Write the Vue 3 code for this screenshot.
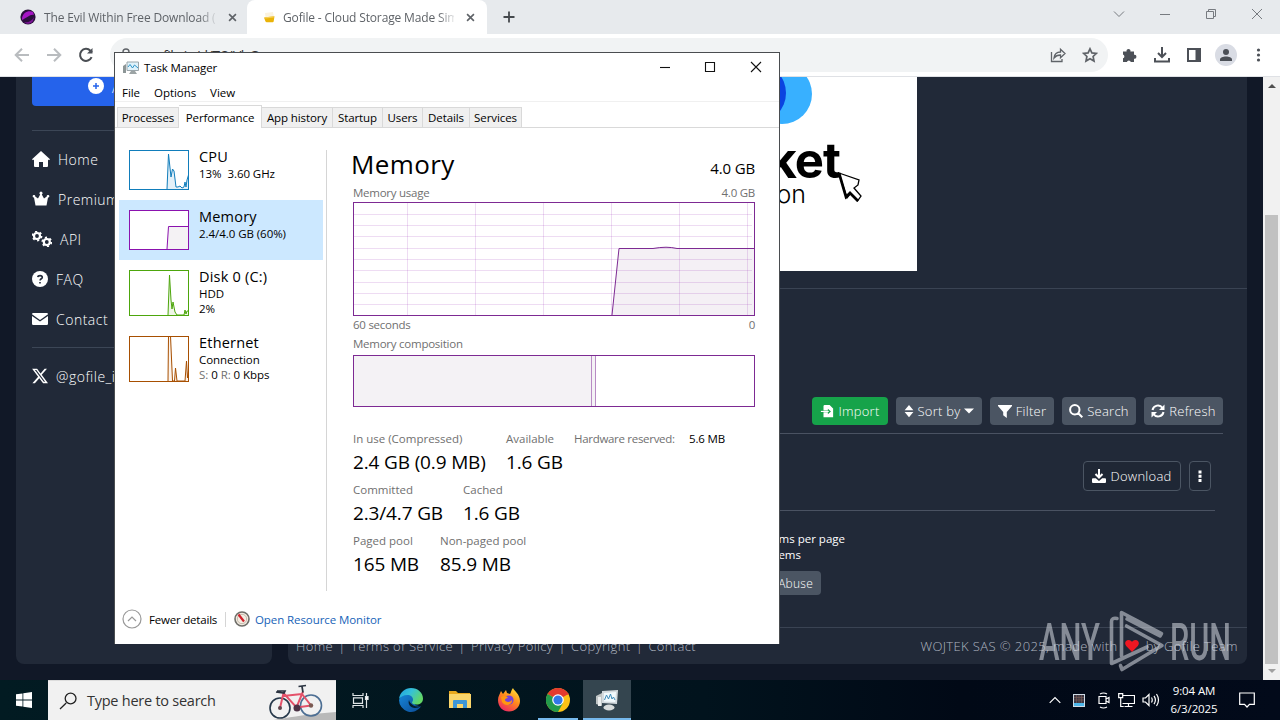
<template>
  <div class="screen">
    <header class="tab-strip">
      <div class="tab">
        <svg class="fav" viewBox="0 0 16 16">
          <circle cx="8" cy="8" r="7.6" fill="#2b0f3c" />
          <path d="M2 9C3 4 8 1 13 3L14 6C10 5 7 9 2 11z" fill="#a514c4" />
          <path d="M4 13c4 1 8-1 10-5l-1 4c-2 3-6 4-9 1z" fill="#7b1495" />
        </svg>
        <span class="tab-title">The Evil Within Free Download (v</span>
        <svg class="x" viewBox="0 0 10 10"><path d="M1.2 1.2l7.6 7.6M8.8 1.2L1.2 8.8" /></svg>
      </div>
      <div class="tab active">
        <svg class="fav" viewBox="0 0 16 16">
          <path d="M4 4l8-1 .8 4-8.300 1z" fill="#fbf3df" />
          <path d="M3 8.500l10.500-1.300-.8 5c-.1.800-.6 1.100-1.300 1.100H5.800c-.7 0-1.200-.4-1.400-1z" fill="#eab308" />
          <path d="M4 8.300l9-1-.2 1.200-8.500 1z" fill="#f5cf55" />
        </svg>
        <span class="tab-title">Gofile - Cloud Storage Made Sim</span>
        <svg class="x" viewBox="0 0 10 10"><path d="M1.2 1.2l7.6 7.6M8.8 1.2L1.2 8.8" /></svg>
      </div>
      <svg class="plus" viewBox="0 0 12 12"><path d="M6 .5v11M.5 6h11" /></svg>
      <div class="win-controls">
        <svg viewBox="0 0 12 12"><path d="M1 3.5l5 5 5-5" /></svg>
        <svg viewBox="0 0 12 12"><path d="M1 6.5h10" /></svg>
        <svg viewBox="0 0 12 12"><path d="M1.5 3.5h7v7h-7zM3.5 3.5v-2h7v7h-2" /></svg>
        <svg viewBox="0 0 12 12"><path d="M1 1l10 10M11 1L1 11" /></svg>
      </div>
    </header>

    <nav class="toolbar">
      <svg class="nav-icon faded" viewBox="0 0 16 16"><path d="M15 8H2M8 1.7L1.7 8 8 14.3" /></svg>
      <svg class="nav-icon faded" viewBox="0 0 16 16"><path d="M1 8h13M8 1.7L14.3 8 8 14.3" /></svg>
      <svg class="nav-icon reload" viewBox="0 0 16 16">
        <path d="M13.6 10.2A6 6 0 1 1 12.4 3.7L14 5.3" />
        <path d="M14.5 1v5.5H9z" class="solid" />
      </svg>
      <div class="omnibox">
        <svg class="lock" viewBox="0 0 12 14"><path d="M3 6V4a3 3 0 0 1 6 0v2M2 6h8v7H2z" /></svg>
        <span class="url">gofile.io/d/TOJVbG</span>
        <svg class="box-icon" viewBox="0 0 16 16">
          <path d="M1.500 5v9.500h10.500V12" />
          <path d="M4 11c.5-4 3-6 6.500-6V2.300L15 6.500l-4.500 4.200V8C7.500 8 5.500 9 4 11z" />
        </svg>
        <svg class="box-icon" viewBox="0 0 16 16">
          <path class="star" d="M8 1.800l1.900 4.100 4.500.5-3.300 3.100.9 4.500L8 11.700 4 14l.9-4.500-3.300-3.100 4.500-.5z" />
        </svg>
      </div>
      <div class="chrome-actions">
        <svg viewBox="0 0 16 16">
          <path class="solid" d="M1 4.500h3.600a2 2 0 1 1 3.800 0H12v3.300a2 2 0 1 1 0 3.900V15H8.800a2 2 0 0 0-3.900 0H1v-3.700a2 2 0 0 0 0-3.800z" />
        </svg>
        <svg viewBox="0 0 16 16"><path d="M8 0v9.500M4 6l4 4 4-4M1 11v3.500h14V11" /></svg>
        <svg viewBox="0 0 16 16"><path d="M2 2h12v12H2z" /><path class="solid" d="M9.500 2H14v12H9.500z" /></svg>
        <span class="avatar">
          <svg viewBox="0 0 16 16"><circle class="solid" cx="8" cy="5" r="3" /><path class="solid" d="M2 14v-1.500C2 10.500 5 9.500 8 9.500s6 1 6 3V14z" /></svg>
        </span>
        <svg viewBox="0 0 16 16">
          <circle class="solid" cx="8.500" cy="3" r="1.600" /><circle class="solid" cx="8.500" cy="8" r="1.600" /><circle class="solid" cx="8.500" cy="13" r="1.600" />
        </svg>
      </div>
    </nav>

    <main class="page">
      <aside class="sidebar">
        <div class="upload-btn">
          <svg viewBox="0 0 16 16"><circle cx="8" cy="8" r="8" fill="#fff" /><path d="M8 5v6M5 8h6" stroke="#2563eb" stroke-width="1.5" /></svg>
          <span>Add</span>
        </div>
        <hr />
        <a class="side-link">
          <svg viewBox="0 0 18 16"><path d="M9 0L0 8.200l1 1.100 1-.8V15q0 1 1 1h4v-5h4v5h4q1 0 1-1V8.500l1 .8 1-1.100z" /></svg>
          <span>Home</span>
        </a>
        <a class="side-link">
          <svg viewBox="0 0 18 16"><path d="M3.500 14.500L2 6.500a1.300 1.300 0 1 1 1.200-1L6 7.500l2.200-4a1.500 1.500 0 1 1 1.600 0l2.200 4 2.800-2a1.300 1.300 0 1 1 1.200 1l-1.500 8z" /></svg>
          <span>Premium</span>
        </a>
        <a class="side-link api">
          <svg viewBox="0 0 20 16">
            <g class="gear">
              <circle cx="5" cy="5" r="3" /><circle class="teeth" cx="5" cy="5" r="4.500" />
              <circle cx="14.800" cy="11" r="3" /><circle class="teeth" cx="14.800" cy="11" r="4.500" />
            </g>
          </svg>
          <span>API</span>
        </a>
        <a class="side-link small">
          <svg viewBox="0 0 16 16">
            <circle cx="8" cy="8" r="8" />
            <path d="M5.800 6.200c.2-2 4.500-2.200 4.500.2 0 1.300-2.200 1.400-2.200 3M8 11v1.600" stroke="#212938" stroke-width="1.600" fill="none" />
          </svg>
          <span>FAQ</span>
        </a>
        <a class="side-link small">
          <svg viewBox="0 0 16 16">
            <path d="M1.200 2h13.600Q16 2 16 3.200L8 9 0 3.200Q0 2 1.200 2z" />
            <path d="M0 5l8 5.600L16 5v7.700q0 1.300-1.300 1.300H1.300Q0 14 0 12.700z" />
          </svg>
          <span>Contact</span>
        </a>
        <hr class="second" />
        <a class="side-link small">
          <svg viewBox="0 0 16 16"><path fill-rule="evenodd" d="M12.600.8h2.400L9.700 6.800 16 15.200h-4.900L7.300 10.200l-4.400 5H.4l5.700-6.500L.1.800h5l3.500 4.600zM11.800 13.700h1.300L4.300 2.100H2.900z" /></svg>
          <span>@gofile_io</span>
        </a>
      </aside>

      <section class="content">
        <div class="banner">
          <svg viewBox="0 0 300 194">
            <circle cx="165" cy="17" r="30" fill="#38b0ff" />
            <circle cx="139" cy="16" r="30" fill="#0b43e0" />
            <text x="223" y="101" class="ket" text-anchor="end">ket</text>
            <text x="189" y="126" class="ion" text-anchor="end">on</text>
            <path d="M222 96l20 7-1 5-4 3 7 8-3.500 5-7-7.500-3.500 4.500z" fill="#fff" stroke="#000" stroke-width="1.300" />
            <path d="M222 96l7 24 4-4 8 8" fill="none" stroke="#000" stroke-width="2.700" />
          </svg>
        </div>
        <div class="file-panel">
          <div class="action-row">
            <button class="btn import">
              <svg viewBox="0 0 14 16">
                <path d="M4 1h6l4 4v10H3V9.500h5v2.300L11.500 8.500 8 5.300v2.200H3V2z" />
                <path d="M0 8.500h9" class="line" />
              </svg>Import
            </button>
            <button class="btn sort">
              <svg class="updown" viewBox="0 0 10 16"><path d="M5 1L10 7H0zM5 15L0 9h10z" /></svg>Sort by<svg class="caret" viewBox="0 0 10 6"><path d="M0 .5h10L5 5.500z" /></svg>
            </button>
            <button class="btn filter">
              <svg viewBox="0 0 14 14"><path d="M0 1h14v1L8.800 8v6L5.200 11.200V8L0 2z" /></svg>Filter
            </button>
            <button class="btn search">
              <svg viewBox="0 0 14 14"><path class="line thick" d="M9 9l4.300 4.300M10.500 5.800a4.700 4.700 0 1 1-9.400 0 4.700 4.700 0 0 1 9.400 0z" /></svg>Search
            </button>
            <button class="btn refresh">
              <svg viewBox="0 0 14 14">
                <path class="line thick" d="M1.500 6A5.500 5.500 0 0 1 11.500 4M12.500 8A5.500 5.500 0 0 1 2.500 10" />
                <path d="M13.500.5V6H8zM.5 13.500V8H6z" />
              </svg>Refresh
            </button>
          </div>
          <div class="file-row">
            <button class="btn outline download">
              <svg viewBox="0 0 14 14">
                <path class="line thick" d="M7 0v8M3.500 5L7 8.500 10.500 5" />
                <path d="M1 9.300h2.800L7 12l3.200-2.700H13q1 0 1 1v2.700q0 1-1 1H1q-1 0-1-1v-2.700q0-1 1-1z" />
              </svg>Download
            </button>
            <button class="btn outline dots">
              <svg viewBox="0 0 4 12"><path d="M.5.5h3v3h-3zM.5 4.700h3v3h-3zM.5 8.900h3v3h-3z" /></svg>
            </button>
          </div>
          <div class="paging">
            <span>items per page</span>
            <span class="count">items</span>
            <button class="btn abuse">Abuse</button>
          </div>
        </div>
        <footer class="site-footer">
          <div class="links">
            <template v-for="(link, idx) in footerLinks" :key="link">
              <i v-if="idx">|</i><span>{{ link }}</span>
            </template>
          </div>
          <div class="credit">
            WOJTEK SAS © 2025, made with
            <svg viewBox="0 0 14 12"><path d="M7 12L1.200 6C-1 3.500.5 0 3.500 0 5.500 0 6.500 1 7 2 7.500 1 8.500 0 10.500 0c3 0 4.500 3.500 2.300 6z" /></svg>
            by Gofile Team
          </div>
        </footer>
      </section>

      <div class="scrollbar">
        <svg viewBox="0 0 8 4"><path d="M4 0l4 4H0z" fill="#505050" /></svg>
        <div class="thumb"></div>
        <svg viewBox="0 0 8 4"><path d="M0 0h8L4 4z" fill="#a0a0a0" /></svg>
      </div>
    </main>

    <div class="taskbar">
      <div class="start">
        <svg viewBox="0 0 16 16"><path d="M0 2.300L6.500 1.400v6.200H0zM7.300 1.300L16 0v7.600H7.300zM0 8.400h6.500v6.200L0 13.700zM7.300 8.400H16V16l-8.700-1.300z" fill="#fff" /></svg>
      </div>
      <div class="search-box">
        <svg class="glass" viewBox="0 0 18 18"><path d="M7.200 11L1 17M17 6.500a5.400 5.400 0 1 1-10.800 0 5.400 5.400 0 0 1 10.800 0z" /></svg>
        <span>Type here to search</span>
        <svg class="bike" viewBox="0 0 76 40">
          <path d="M8 40C30 36 50 33 76 31v9z" fill="#b9b9b9" />
          <g fill="none">
            <circle cx="20" cy="27" r="10" stroke="#26384a" stroke-width="1.600" />
            <circle cx="51" cy="24.500" r="10.500" stroke="#4c6e93" stroke-width="1.600" />
            <path d="M20 27l3.500-15 13 14.500L43 10.500M23 15l19-2M36.500 26.500L51 24.500 42 13" stroke="#e4526a" stroke-width="2" />
            <path d="M16 11l8 1 1-2h-8M38.500 5.500l7.500-1M42 5.500l1 6" stroke="#2a3340" stroke-width="1.700" />
          </g>
          <circle cx="37" cy="27" r="3.500" fill="#4c3346" />
          <circle cx="20" cy="27" r="2" fill="#60444c" />
          <circle cx="51" cy="24.500" r="2.200" fill="#7a5a52" />
        </svg>
      </div>
      <div class="task-icon view">
        <svg viewBox="0 0 17 17"><path d="M1 1v2.500h10V1M1 16v-2.500h10V16M1.500 5.800h9v5.500h-9zM14.500 1v15" /><path d="M13.500 4.500h2.500v3h-2.500z" class="white" /></svg>
      </div>
      <div class="task-icon">
        <svg class="app" viewBox="0 0 24 24">
          <defs>
            <linearGradient id="edgeTop" x1="0" x2="1" y1="0" y2=".5"><stop offset="0" stop-color="#1f9fe0" /><stop offset=".5" stop-color="#35c1d8" /><stop offset="1" stop-color="#62d766" /></linearGradient>
            <linearGradient id="edgeLow" x1="0" x2="1" y1="0" y2="1"><stop offset="0" stop-color="#1789dc" /><stop offset="1" stop-color="#0b4b96" /></linearGradient>
          </defs>
          <path d="M0 12A12 12 0 0 1 12 4l6 9-2 4 6 1.500A12 12 0 0 1 0 12z" fill="url(#edgeLow)" />
          <path d="M0 11C1 4 6 0 12 0c7 0 12 5 12 10.500 0 4-3 6-6.500 6-3 0-4.500-1-4.500-2 0-.7 1-1.200 1-3C14 9 11.500 7 8.500 7 4.500 7 1.500 9 0 11z" fill="url(#edgeTop)" />
          <path d="M10 12c-1.500 4 1.500 8 6 8 2.500 0 4.500-.8 6-2.200-2.500 1-5.500.8-7.500-.4-2.300-1.300-4-3-4.500-5.400z" fill="#041d2c" />
        </svg>
      </div>
      <div class="task-icon">
        <svg class="app" viewBox="0 0 24 24">
          <path d="M1 3h7l2 2h12v5H1z" fill="#e9a91e" />
          <path d="M1 6h22v14H1z" fill="#fbd66b" />
          <path d="M5 20v-7q0-1 1-1h12q1 0 1 1v7h-4v-4H9v4z" fill="#3f97d6" />
        </svg>
      </div>
      <div class="task-icon">
        <svg class="app" viewBox="0 0 24 24">
          <defs>
            <linearGradient id="fox" x1=".8" x2=".2" y1="0" y2="1"><stop offset="0" stop-color="#ffe13b" /><stop offset=".45" stop-color="#ff8a1c" /><stop offset="1" stop-color="#ec2067" /></linearGradient>
          </defs>
          <path d="M1 12C1 8 3 6 4 3l2 3 3-4 1 3 3 1c1-1 1-4 3-6 1 3 7 6 7 13 0 6-5 10.500-11 10.500S1 19 1 12z" fill="url(#fox)" />
          <circle cx="12" cy="12" r="4.600" fill="#7542d9" />
          <path d="M4 9c3-2 6-1 7 1-2 0-3 1-3 2 0 2 5 3 7 0 1 5-7 7-10 2z" fill="#ff980f" />
        </svg>
      </div>
      <div class="task-icon running">
        <svg class="app" viewBox="0 0 24 24">
          <circle cx="12" cy="12" r="12" fill="#fbc116" />
          <path d="M12 12L1.600 6a12 12 0 0 1 20.800 0z" fill="#e33b2e" />
          <path d="M12 12L1.600 6A12 12 0 0 0 12 24l5-9z" fill="#229a4b" />
          <path d="M12 6h10.400" stroke="#e33b2e" stroke-width="1" />
          <circle cx="12" cy="12" r="5.800" fill="#fff" /><circle cx="12" cy="12" r="4.600" fill="#3178e8" />
        </svg>
      </div>
      <div class="task-icon current">
        <svg class="app" viewBox="0 0 24 24">
          <path d="M1 8l6-3v13l-6-2z" fill="#bfc4c5" /><path d="M3 9h3v9H3z" fill="#ecefef" />
          <path d="M7 3l16-1-1 14-15-1z" fill="#d3dade" /><path d="M9 5l12-1-.8 10L9 13.500z" fill="#f2fafd" />
          <path d="M9.500 12l2-5 2 4 2-5 1.500 5 1.500-2 1.500 3" stroke="#3f8cba" fill="none" />
          <ellipse cx="14" cy="19.500" rx="5.500" ry="3" fill="#d8dcdc" />
        </svg>
      </div>
      <div class="tray">
        <svg class="t-chev" viewBox="0 0 12 8"><path d="M.7 6.800L6 1.500l5.300 5.300" /></svg>
        <svg class="t-grid" viewBox="0 0 12 13">
          <path d="M0 0h12v13H0z" fill="#cfdbe5" stroke="none" /><path d="M1 1h10v8H1z" fill="#3b3541" stroke="none" />
          <path d="M1 3.500h10M1 6h10M3.500 1v8M6 1v8M8.500 1v8" stroke="#7d6058" stroke-width=".6" /><path d="M1 9h10v3H1z" fill="#4db7ea" stroke="none" />
        </svg>
        <svg class="t-cam" viewBox="0 0 14 17"><path d="M2 4.500h7v7H2zM9 7l3-1.500v5L9 9M3 2Q6.500 0 10 2M3 15q3.500 2 7 0" /></svg>
        <svg class="t-net" viewBox="0 0 17 15"><path d="M4.500 2.500h12v8h-12M10.500 10.500v3M6.500 13.500h8M.7.700h4v4h-4zM2.700 4.700v8.800h3" /></svg>
        <svg class="t-vol" viewBox="0 0 18 14"><path d="M1 5h2.500L7 1.500v11L3.500 9H1zM9.500 4.500q1.500 2.500 0 5M12 2.800q2.800 4.200 0 8.400M14.500 1q4 6 0 12" /></svg>
        <div class="clock"><span>9:04 AM</span><span>6/3/2025</span></div>
        <svg class="t-note" viewBox="0 0 16 16"><path d="M.7 1h14.600v11.300H10.500L8 15l-2.500-2.700H.7z" /></svg>
      </div>
    </div>

    <section class="tm">
      <div class="tm-title">
        <svg class="tm-icon" viewBox="0 0 16 15">
          <path d="M0 6l3-2v9H0z" fill="#8d9697" /><path d="M4 2h11.500v8.500H4z" fill="#dff2fb" stroke="#9aa5aa" />
          <path d="M5 7l2-2.500L9.500 8l2-3L15 8" stroke="#2f95c9" fill="none" /><path d="M6 14h8l-2-3H8z" fill="#9ca4a5" />
        </svg>
        <span>Task Manager</span>
        <div class="tm-controls">
          <svg viewBox="0 0 12 12"><path d="M2 6.500h10" /></svg>
          <svg viewBox="0 0 12 12"><path d="M1.500 1.500h9v9h-9z" /></svg>
          <svg viewBox="0 0 12 12"><path d="M1 1l10 10M11 1L1 11" /></svg>
        </div>
      </div>
      <div class="tm-menu"><span>File</span><span>Options</span><span>View</span></div>
      <div class="tm-tabs">
        <span v-for="tab in tabs" :key="tab.name" class="tm-tab" :class="{ current: tab.name === 'Performance' }" :style="{ width: tab.w + 'px' }">{{ tab.name }}</span>
      </div>
      <div class="tm-body">
        <div class="perf-list">
          <div v-for="item in resources" :key="item.name" class="perf-item" :class="{ selected: item.name === 'Memory', tall: item.h > 40 }">
            <svg class="thumb-chart" :height="item.h" :viewBox="`0 0 60 ${item.h}`">
              <rect width="60" :height="item.h" fill="#fff" />
              <path :d="item.line + ` V${item.h - 1} H38z`" :fill="item.fill" />
              <path :d="item.line" fill="none" :stroke="item.color" />
              <rect x=".5" y=".5" width="59" :height="item.h - 1" fill="none" :stroke="item.color" />
            </svg>
            <div class="perf-text">
              <strong>{{ item.name }}</strong>
              <span v-for="line in item.lines" :key="line">{{ line }}</span>
              <span v-if="item.name === 'Ethernet'"><em>S:</em> 0 <em>R:</em> 0 Kbps</span>
            </div>
          </div>
        </div>
        <div class="detail">
          <div class="detail-head"><h1>Memory</h1><span>4.0 GB</span></div>
          <div class="caption"><span>Memory usage</span><span>4.0 GB</span></div>
          <svg class="usage" viewBox="0 0 402 114">
            <path class="usage-fill" d="M259 113L266 46h34q14-3 24 0h77v67z" />
            <path class="grid" :d="gridPath" />
            <path class="usage-line" d="M259 113L266 46.500h34q14-2.500 24 0h77.500" />
            <rect x=".5" y=".5" width="401" height="113" class="frame" />
          </svg>
          <div class="caption below"><span>60 seconds</span><span>0</span></div>
          <div class="caption comp"><span>Memory composition</span></div>
          <div class="composition"><div class="used"></div><div class="modified"></div></div>
          <div class="stats">
            <div v-for="(row, idx) in stats" :key="idx" class="stat-row">
              <div v-for="s in row" :key="s.label" class="stat" :style="{ width: s.w + 'px' }">
                <label>{{ s.label }}</label><b>{{ s.value }}</b>
              </div>
              <div v-if="idx === 0" class="reserved"><label>Hardware reserved:</label><span>5.6 MB</span></div>
            </div>
          </div>
        </div>
      </div>
      <div class="tm-footer">
        <svg class="fewer" viewBox="0 0 20 20"><circle cx="10" cy="10" r="9" /><path d="M6 12l4-4 4 4" /></svg>
        <span class="fewer-text">Fewer details</span>
        <svg class="gauge" viewBox="0 0 16 16">
          <circle cx="8" cy="8" r="7" fill="#f3ece2" stroke="#6f6e69" stroke-width="1.600" />
          <circle cx="8" cy="8" r="4.700" fill="none" stroke="#c4b9aa" />
          <path d="M4.500 3.500l5.500 7" stroke="#d0202a" stroke-width="2.200" />
        </svg>
        <a>Open Resource Monitor</a>
      </div>
    </section>

    <svg class="watermark" viewBox="0 0 196 64">
      <text x="1" y="52" textLength="61" lengthAdjust="spacingAndGlyphs">ANY</text>
      <text x="132" y="52" textLength="61" lengthAdjust="spacingAndGlyphs">RUN</text>
      <path d="M79 10.500q-5.500-1-5.500 3V55.500L109 39M83.500 48V4.500L123.500 25.500l-1.500 2.500L89 11M88.500 18L124 37.500 84 61.500l-1.500-4" />
    </svg>
  </div>
</template>

<script setup>
const footerLinks = ['Home', 'Terms of Service', 'Privacy Policy', 'Copyright', 'Contact']

const tabs = [
  { name: 'Processes', w: 62 },
  { name: 'Performance', w: 83 },
  { name: 'App history', w: 71 },
  { name: 'Startup', w: 50 },
  { name: 'Users', w: 40 },
  { name: 'Details', w: 47 },
  { name: 'Services', w: 52 },
]

const resources = [
  { name: 'CPU', h: 40, color: '#117dbb', fill: '#e3f0f8', lines: ['13%  3.60 GHz'], line: 'M38 39L39.500 4L42 27L43.500 19L45 21L47 37H49L51 36L53 38L55 37L56 32L57 37L58 30L59.500 25' },
  { name: 'Memory', h: 40, color: '#8b12ae', fill: '#f4f2f4', lines: ['2.4/4.0 GB (60%)'], line: 'M38 39L39.500 16.500H60' },
  { name: 'Disk 0 (C:)', h: 46, color: '#4da60c', fill: '#eef6e6', lines: ['HDD', '2%'], line: 'M39 45L40.500 5L42 30L43 39L44 32L46 42L48 45L55 45L56 40L57 44L58 41H60' },
  { name: 'Ethernet', h: 46, color: '#a74f01', fill: '#fcf3eb', lines: ['Connection'], line: 'M39 45L39.500 0H41.500L43.500 45H45.500L46.500 32L48 45H56L57.500 25L58.500 42L59.500 35' },
]

const stats = [
  [
    { label: 'In use (Compressed)', value: '2.4 GB (0.9 MB)', w: 153 },
    { label: 'Available', value: '1.6 GB', w: 68 },
  ],
  [
    { label: 'Committed', value: '2.3/4.7 GB', w: 110 },
    { label: 'Cached', value: '1.6 GB', w: 68 },
  ],
  [
    { label: 'Paged pool', value: '165 MB', w: 87 },
    { label: 'Non-paged pool', value: '85.9 MB', w: 100 },
  ],
]

const gridPath = [
  ...[54, 122, 190, 258, 326, 394].map((x) => `M${x}.5 1v112`),
  ...[12, 23, 34, 46, 57, 68, 80, 91, 102].map((y) => `M1 ${y}.5h398`),
].join('')
</script>

<style>
body {
  overflow: hidden;
}
</style>

<style scoped>
* {
  box-sizing: border-box;
}

.screen {
  position: relative;
  width: 1280px;
  height: 720px;
  display: flex;
  flex-direction: column;
  overflow: hidden;
  font-family: 'Open Sans', 'Noto Sans', sans-serif;
  font-size: 12px;
  white-space: nowrap;
}

svg {
  flex: none;
  display: block;
}

/* browser */
.tab-strip {
  height: 34px;
  flex: none;
  display: flex;
  align-items: center;
  background: #e7eaed;
}

.tab {
  width: 247px;
  height: 34px;
  display: flex;
  align-items: center;
  padding-left: 20px;
  color: #5f6368;
}
.tab.active {
  width: 240px;
  padding-left: 14px;
  background: #fff;
  border-radius: 8px 8px 0 0;
}

.fav { width: 16px; height: 16px; }
.tab-title {
  margin-left: 8px;
  width: 171px;
  overflow: hidden;
  letter-spacing: -0.15px;
  mask-image: linear-gradient(90deg, #000 155px, transparent 174px);
}
.tab.active .tab-title { margin-left: 6px; }
.x {
  width: 9px;
  height: 9px;
  margin-left: 13px;
  stroke: #5f6368;
  stroke-width: 1.8;
}
.tab.active .x { margin-left: 12px; }
.plus { width: 12px; height: 12px; margin-left: 16px; stroke: #45494d; stroke-width: 1.8; }

.win-controls {
  margin-left: auto;
  margin-top: -6px;
  display: flex;
  gap: 34px;
  padding-right: 17px;
}
.win-controls svg { width: 12px; height: 12px; fill: none; stroke: #777b80; stroke-width: 1; }

.toolbar {
  height: 43px;
  flex: none;
  display: flex;
  align-items: center;
  background: #fff;
  border-bottom: 1px solid #dfe1e5;
  padding-left: 14px;
}
.nav-icon { width: 16px; height: 16px; margin-right: 16px; fill: none; stroke: #5f6368; stroke-width: 2; }
.nav-icon.faded { stroke: #b9bcbf; }
.nav-icon.reload { stroke: #4a4e53; }
.solid { fill: #4c5057; stroke: none; }

.omnibox {
  width: 998px;
  height: 34px;
  border-radius: 17px;
  background: #f1f3f4;
  display: flex;
  align-items: center;
  padding: 0 10px;
}
.lock { width: 12px; height: 14px; fill: none; stroke: #5f6368; stroke-width: 1.4; }
.url { font-size: 14px; color: #333; margin-left: 16px; margin-right: auto; letter-spacing: -0.5px; }
.box-icon { width: 16px; height: 16px; margin-left: 16px; fill: none; stroke: #5f6368; stroke-width: 1.3; }
.star { stroke-width: 1.7; }

.chrome-actions { display: flex; align-items: center; gap: 16px; margin-left: 14px; }
.chrome-actions svg { width: 16px; height: 16px; fill: none; stroke: #4c5057; stroke-width: 2; }
.avatar { width: 22px; height: 22px; margin: 0 -3px; border-radius: 50%; background: #d9dce4; display: flex; align-items: center; justify-content: center; }

/* page */
.page {
  height: 603px;
  flex: none;
  display: flex;
  background: #111827;
  padding-left: 16px;
  color: #fff;
  font-weight: 300;
}

.sidebar {
  width: 256px;
  height: 587px;
  padding: 0 16px;
  background: #212938;
  border-radius: 0 0 8px 8px;
}
.upload-btn {
  height: 29px;
  margin-bottom: 24px;
  padding: 1px 0 0 56px;
  background: #2563eb;
  border-radius: 0 0 4px 4px;
  display: flex;
  gap: 8px;
  font-size: 14px;
}
.upload-btn svg { width: 16px; height: 16px; }
.sidebar hr { margin: 0 0 8px; border: 0; border-top: 1px solid #3c4656; }
.sidebar hr.second { margin-top: 8px; }
.side-link {
  height: 40px;
  display: flex;
  align-items: center;
  gap: 8px;
  font-size: 14px;
  letter-spacing: 0.5px;
}
.side-link svg { width: 18px; height: 16px; fill: #fff; }
.side-link.small svg { width: 16px; }
.side-link.api svg { width: 20px; }
.gear { fill: none; stroke: #fff; stroke-width: 2.2; }
.teeth { stroke-width: 1.8; stroke-dasharray: 2.1 2.6; }

.content {
  width: 959px;
  height: 587px;
  margin: 0 16px;
  display: flex;
  flex-direction: column;
  background: #212938;
  border-radius: 0 0 8px 8px;
}
.banner {
  display: flex;
  justify-content: center;
  height: 212px;
  padding-right: 1px;
  border-bottom: 1px solid #3a4353;
}
.banner svg { width: 300px; height: 194px; background: #fff; }
.ket { font: 700 49px Inter, sans-serif; letter-spacing: -1px; }
.ion { font: 300 25px Inter, sans-serif; }

.file-panel { height: 338px; padding: 108px 24px 0 16px; }
.action-row {
  height: 37px;
  display: flex;
  justify-content: flex-end;
  gap: 8px;
  border-bottom: 1px solid #4a5262;
}
.btn {
  height: 28px;
  padding: 0;
  border: 0;
  border-radius: 4px;
  display: flex;
  align-items: center;
  justify-content: center;
  gap: 4px;
  color: #fff;
  background: #4b5563;
  font: 300 13px 'Open Sans', sans-serif;
  letter-spacing: 0.25px;
}
.btn svg { width: 14px; height: 14px; fill: #fff; }
.line { fill: none; stroke: #fff; stroke-width: 1.3; }
.line.thick { stroke-width: 2; }
.btn.import { width: 76px; background: #16a34a; }
.btn.sort { width: 86px; }
.btn.filter { width: 64px; }
.btn.search { width: 74px; }
.btn.refresh { width: 79px; }
.btn .updown { width: 10px; }
.btn .caret { width: 10px; height: 6px; }
.btn.outline { height: 30px; background: #1f2735; border: 1px solid #4b5563; }
.btn.download { width: 98px; }
.btn.dots { width: 22px; }
.btn.dots svg { width: 4px; height: 12px; }
.file-row {
  height: 77px;
  margin-right: 8px;
  padding: 27px 4px 0 0;
  display: flex;
  justify-content: flex-end;
  gap: 8px;
  border-bottom: 1px solid #4a5262;
}
.paging { width: 541px; padding-top: 20px; display: flex; flex-direction: column; align-items: flex-end; font-size: 11.5px; font-weight: 400; line-height: 16px; }
.count { margin-right: 44px; }
.btn.abuse { height: 24px; width: 66px; margin: 8px 24px 0 0; justify-content: flex-end; padding-right: 8px; font-size: 12px; }

.site-footer {
  flex: 1;
  display: flex;
  align-items: center;
  justify-content: space-between;
  padding: 0 9px 0 8px;
  border-top: 1px solid #3a4353;
  font-size: 13px;
  letter-spacing: 0.35px;
  color: #b0b6c0;
}
.links { display: flex; }
.links i { font-style: normal; width: 18px; text-align: center; }
.credit { display: flex; gap: 7px; align-items: center; letter-spacing: 0.4px; }
.credit svg { width: 14px; height: 12px; fill: #f01722; }

.scrollbar {
  width: 17px;
  background: #f1f1f1;
  display: flex;
  flex-direction: column;
  align-items: center;
  padding: 7px 0;
}
.scrollbar svg { width: 8px; height: 4px; }
.scrollbar .thumb { width: 13px; height: 449px; margin: 127px 0 5px; background: #c1c1c1; }

/* taskbar */
.taskbar {
  height: 40px;
  flex: none;
  display: flex;
  align-items: center;
  background: linear-gradient(90deg, #021b22, #01131d 55%, #010916 75%, #020a1a);
  color: #fff;
}
.start { width: 48px; display: flex; justify-content: center; }
.start svg { width: 16px; height: 16px; }
.search-box {
  width: 288px;
  height: 40px;
  display: flex;
  align-items: center;
  padding-left: 11px;
  background: #f1f1f1;
  border-top: 1px solid #dcdcdc;
  color: #333;
  font-size: 14.5px;
}
.search-box span { width: 170px; margin-left: 10px; letter-spacing: -0.25px; }
.glass { width: 18px; height: 18px; fill: none; stroke: #222; stroke-width: 1.3; }
.bike { width: 76px; height: 40px; margin-left: 3px; }
.task-icon { width: 48px; height: 40px; margin-right: 1px; display: flex; align-items: center; justify-content: center; }
.task-icon.view { margin-right: 3px; }
.task-icon.view svg { width: 17px; height: 17px; fill: none; stroke: #dfe5e7; stroke-width: 1.2; }
.white { fill: #fff; }
.app { width: 24px; height: 24px; }
.task-icon.running { background: linear-gradient(#76b9ed, #76b9ed) center bottom / 40px 2px no-repeat; }
.task-icon.current { background: #34454f; border-bottom: 2px solid #76b9ed; padding-top: 2px; }
.tray { margin-left: auto; display: flex; align-items: center; padding-right: 25px; }
.tray svg { fill: none; stroke: #fff; stroke-width: 1.2; }
.t-chev { width: 12px; height: 8px; margin-right: 12px; }
.t-grid { width: 12px; height: 13px; margin-right: 12px; }
.t-cam { width: 14px; height: 17px; margin-right: 7px; }
.t-net { width: 17px; height: 15px; margin-right: 7px; }
.t-vol { width: 18px; height: 14px; margin-right: 9px; }
.t-note { width: 16px; height: 16px; margin-left: 20px; }
.clock { width: 50px; display: flex; flex-direction: column; align-items: center; line-height: 18px; font-size: 11.5px; letter-spacing: -0.1px; }

/* task manager window, floats over the browser */
.tm {
  position: absolute;
  left: 114px;
  top: 52px;
  width: 666px;
  height: 592px;
  display: flex;
  flex-direction: column;
  background: #fff;
  border: 1px solid #4a4d50;
  border-bottom: 0;
  color: #000;
  letter-spacing: -0.15px;
  font-size: 11.5px;
}
.tm-title { height: 30px; display: flex; align-items: center; padding: 0 0 2px 8px; gap: 5px; }
.tm-icon { width: 16px; height: 15px; }
.tm-controls { margin-left: auto; display: flex; gap: 34px; padding-right: 17px; }
.tm-controls svg { width: 12px; height: 12px; fill: none; stroke: #111; stroke-width: 1.1; }
.tm-menu { height: 19px; display: flex; align-items: center; padding-left: 7px; gap: 14px; border-bottom: 1px solid #f0f0f0; letter-spacing: -0.05px; }
.tm-tabs { height: 26px; display: flex; align-items: flex-end; padding-left: 2px; border-bottom: 1px solid #d9d9d9; letter-spacing: -0.1px; }
.tm-tab {
  height: 20px;
  display: flex;
  align-items: center;
  justify-content: center;
  background: #f0f0f0;
  border: 1px solid #d9d9d9;
  border-width: 1px 1px 0 0;
}
.tm-tab:first-child { border-left-width: 1px; }
.tm-tab.current { height: 23px; margin-bottom: -1px; background: #fff; }

.tm-body { height: 464px; display: flex; padding: 12px 0 0 4px; }
.perf-list { width: 208px; height: 451px; background: linear-gradient(#d5d5d5, #d5d5d5) right bottom / 1px 441px no-repeat; }
.perf-item { width: 204px; height: 60px; display: flex; padding: 10px 0 0 10px; }
.perf-item.tall { height: 66px; }
.perf-item.selected { background: #cce8ff; }
.thumb-chart { width: 60px; }
.perf-text { margin: -3px 0 0 10px; display: flex; flex-direction: column; line-height: 15px; white-space: pre; letter-spacing: -0.05px; }
.perf-text strong { font-weight: 400; font-size: 14.5px; line-height: 19px; letter-spacing: 0.2px; }
.perf-text em { font-style: normal; color: #707070; }

.detail { width: 402px; margin-left: 26px; color: #000; }
.detail-head { height: 44px; display: flex; align-items: flex-end; justify-content: space-between; }
.detail-head h1 { margin: 0 0 0 -2px; font-weight: 400; font-size: 26px; line-height: 40px; letter-spacing: 0.4px; }
.detail-head span { font-size: 15px; line-height: 32px; }
.caption { height: 18px; display: flex; justify-content: space-between; line-height: 17px; color: #707070; letter-spacing: -0.25px; }
.usage { width: 402px; height: 114px; }
.frame { fill: none; stroke: #7d2a93; }
.grid { fill: none; stroke: #8b12ae; stroke-opacity: 0.15; }
.usage-fill { fill: #f4f0f5; }
.usage-line { fill: none; stroke: #7d2a93; }
.caption.below { height: 19px; line-height: 17px; }
.caption.comp { height: 20px; line-height: 18px; }
.composition { width: 402px; height: 52px; display: flex; border: 1px solid #7d2a93; }
.used { width: 238px; background: #f4f2f5; border-right: 1px solid #b88bc4; }
.modified { width: 4px; background: #f4f2f5; border-right: 1px solid #b88bc4; }

.stats { margin-top: 23px; }
.stat-row { height: 51px; display: flex; }
.stat { display: flex; flex-direction: column; }
.stat label, .reserved label { line-height: 18px; color: #707070; letter-spacing: 0; }
.stat b { font-weight: 400; font-size: 19px; line-height: 28px; letter-spacing: -0.15px; }
.reserved { display: flex; line-height: 18px; }
.reserved label { width: 115px; letter-spacing: -0.3px; }

.tm-footer { height: 52px; display: flex; align-items: center; padding: 2px 0 0 7px; }
.fewer { width: 20px; height: 20px; fill: none; stroke: #999; stroke-width: 1.2; }
.fewer-text { width: 77px; margin-left: 7px; border-right: 1px solid #d5d5d5; letter-spacing: -0.2px; }
.gauge { width: 16px; height: 16px; margin: 0 5px 0 8px; }
.tm-footer a { color: #1763b8; letter-spacing: -0.08px; }

/* overlay mark in the lower right corner */
.watermark {
  position: absolute;
  left: 1038px;
  top: 608px;
  width: 196px;
  height: 64px;
  opacity: 0.55;
  fill: #d8dce3;
}
.watermark text { font: 500 52px Roboto, sans-serif; }
.watermark path { fill: none; stroke: #d8dce3; stroke-width: 3.6; stroke-linejoin: round; stroke-linecap: round; }
</style>
